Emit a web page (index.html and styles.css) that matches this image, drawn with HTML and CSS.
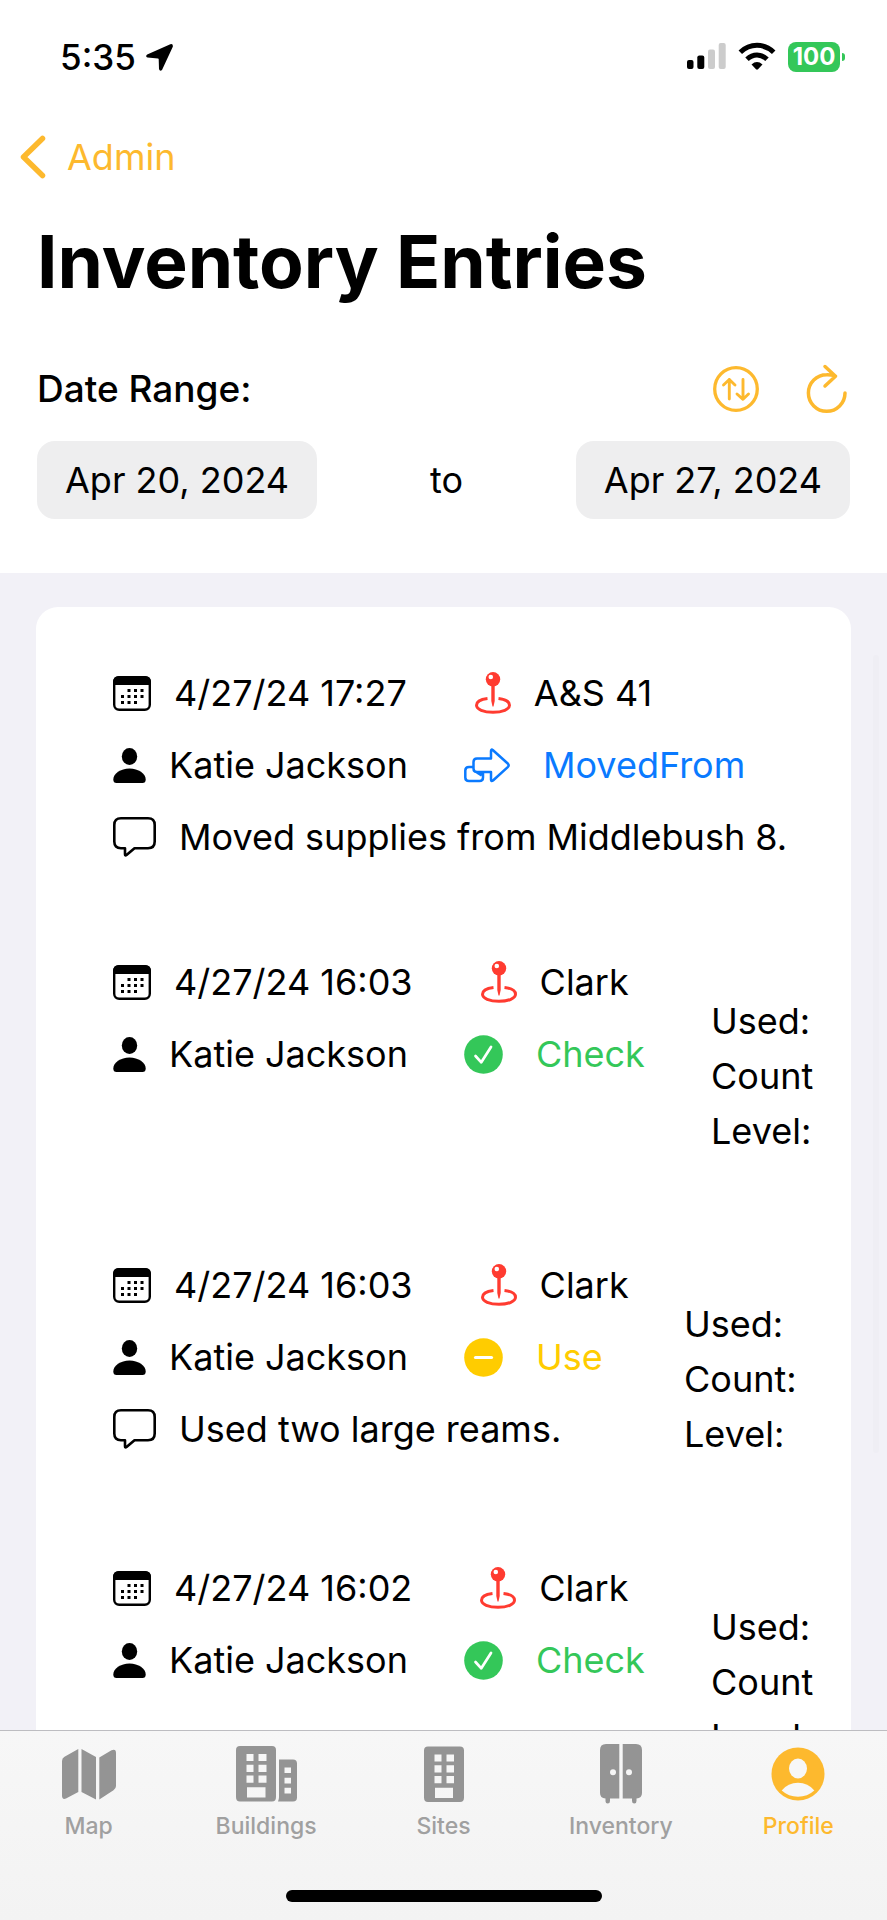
FILE: index.html
```html
<!DOCTYPE html>
<html lang="en">
<head>
<meta charset="utf-8">
<meta name="viewport" content="width=device-width, initial-scale=1">
<title>Inventory Entries</title>
<link rel="stylesheet" href="styles.css">
</head>
<body>
<svg class="sprite" aria-hidden="true">
  <symbol id="calendar" viewBox="0 0 38 35">
    <rect x="1.2" y="1.2" width="35.6" height="32.6" rx="5" fill="none" stroke="currentColor" stroke-width="2.4"/>
    <path d="M0 9V6Q0 0 6 0H32Q38 0 38 6V9Z" fill="currentColor"/>
    <path d="M16 14.5h.01M22.500 14.5h.01M29 14.500h.01M9.500 20.500h.01M16 20.500h.01M22.500 20.500h.01M29 20.500h.01M9.500 26.500h.01M16 26.500h.01M22.500 26.500h.01" stroke="currentColor" stroke-width="3" stroke-linecap="square"/>
  </symbol>
  <symbol id="person" viewBox="0 0 33 35">
    <ellipse cx="16.500" cy="8.500" rx="7.700" ry="8.500" fill="currentColor"/>
    <path d="M3.500 35Q.3 35 .3 31.500C.3 25.500 7.500 20.500 16.500 20.500S32.700 25.500 32.700 31.500Q32.700 35 29.500 35Z" fill="currentColor"/>
  </symbol>
  <symbol id="bubble" viewBox="0 0 43 40">
    <path d="M8 1.300H35Q41.700 1.300 41.700 8V24.500Q41.700 31.200 35 31.200H21.500L13.500 38Q12 39.200 12 37.300V31.200H8Q1.300 31.200 1.300 24.500V8Q1.300 1.300 8 1.300Z" fill="none" stroke="currentColor" stroke-width="2.600" stroke-linejoin="round"/>
  </symbol>
  <symbol id="pin" viewBox="0 0 36 42">
    <path d="M12.500 26.500C5.500 27.300 1.500 30 1.500 33.300C1.500 37.200 8.500 40.300 18 40.300S34.500 37.200 34.500 33.300C34.500 30 30.500 27.300 23.500 26.500" fill="none" stroke="currentColor" stroke-width="3"/>
    <path d="M16.300 12H19.700V29L18.500 34.500H17.500L16.300 29Z" fill="currentColor"/>
    <circle cx="18" cy="7.300" r="7.200" fill="currentColor"/>
    <circle cx="15.800" cy="5" r="2.300" fill="#fff"/>
  </symbol>
  <symbol id="moved" viewBox="0 0 46 35">
    <path d="M10 19H5Q1.300 19 1.300 22.500V29.500Q1.300 33 5 33H15.500Q19 33 19 29.500V25" fill="none" stroke="currentColor" stroke-width="2.500"/>
    <path d="M9.500 19Q10 24 13 26L17 28.500L20 25Z" fill="currentColor"/>
    <path d="M13 10.500H27V3Q27 .5 29 2.200L44 15.800Q45.300 17.300 44 18.800L29 32.500Q27 34 27 31.500V24H13Q9.500 24 9.500 20.500V14Q9.500 10.500 13 10.500Z" fill="#fff" stroke="currentColor" stroke-width="2.500" stroke-linejoin="round"/>
  </symbol>
  <symbol id="check" viewBox="0 0 39 39">
    <circle cx="19.500" cy="19.500" r="19.300" fill="currentColor"/>
    <path d="M11.500 21L17.300 27.300L27 12" fill="none" stroke="#fff" stroke-width="2.700" stroke-linecap="round" stroke-linejoin="round"/>
  </symbol>
  <symbol id="minus" viewBox="0 0 39 39">
    <circle cx="19.500" cy="19.500" r="19.300" fill="currentColor"/>
    <path d="M11.500 19.500H27.500" stroke="#fff" stroke-width="3.200" stroke-linecap="round"/>
  </symbol>
</svg>

<div class="app">
  <div class="status-bar">
    <div class="status-time">
      <span>5:35</span>
      <svg width="27" height="27" viewBox="0 0 27 27"><path d="M24.300.3L1.200 10.600Q-1 12.500 1.500 13.600L12 14.500Q12.600 14.600 12.700 15.200L13 25Q13.800 27.800 16 26L26.800 2.800Q27.300-.6 24.300.3Z" fill="#000"/></svg>
    </div>
    <div class="status-icons">
      <svg width="40" height="30" viewBox="0 0 40 30"><rect x="1" y="18" width="6.500" height="9" rx="2"/><rect x="11.300" y="13.500" width="7" height="13.500" rx="2"/><rect x="22" y="7.500" width="7" height="19.500" rx="2" fill="#ccc"/><rect x="32.700" y="1" width="7" height="26" rx="2" fill="#ccc"/></svg>
      <svg width="38" height="30" viewBox="0 0 38 30"><g fill="none" stroke="#000" stroke-width="5"><path d="M2.300 10.300Q9.500 3.300 19 3.300T35.700 10.300"/><path d="M9 17.300Q13.500 13 19 13T29 17.300"/></g><path d="M13.500 22.500Q19 17.700 24.500 22.500L20 27.300Q19 28.200 18 27.300Z"/></svg>
      <div class="battery"><span class="battery-level">100</span><span class="battery-tip"></span></div>
    </div>
  </div>

  <header class="header">
    <nav class="nav">
      <a class="back" href="#admin">
        <svg width="26" height="44" viewBox="0 0 26 44"><path d="M22.500 3.500L3.500 22L22.500 40.500" fill="none" stroke="currentColor" stroke-width="5.500" stroke-linecap="round" stroke-linejoin="round"/></svg>
        <span>Admin</span>
      </a>
    </nav>
    <h1 class="title">Inventory Entries</h1>
    <div class="filter">
      <h2 class="filter-label">Date Range:</h2>
      <div class="filter-actions">
        <button class="icon-button" type="button" aria-label="Sort">
          <svg width="46" height="46" viewBox="0 0 46 46" fill="none" stroke="currentColor" stroke-width="2.900" stroke-linecap="round" stroke-linejoin="round"><circle cx="23" cy="23" r="21.300" stroke-width="3.300"/><path d="M16.300 33V13.500M10.500 19L16.300 13.500L22 19M30 13.500V33M24 28L30 33.300L35.500 28"/></svg>
        </button>
        <button class="icon-button" type="button" aria-label="Refresh">
          <svg width="46" height="50" viewBox="0 0 46 50" fill="none" stroke="currentColor" stroke-width="3.500" stroke-linecap="round" stroke-linejoin="round"><path d="M41 29A18.300 18.300 0 1 1 22.700 10.700Q27 10.500 31.500 12.200M21 2.500L31.500 12.200L21 22"/></svg>
        </button>
      </div>
    </div>
    <div class="range">
      <button class="date" type="button">Apr 20, 2024</button>
      <span>to</span>
      <button class="date" type="button">Apr 27, 2024</button>
    </div>
  </header>

  <main class="list">
    <div class="scroll-thumb"></div>
    <div class="card">
      <article class="entry">
        <div class="lines">
          <div class="line line-top"><span class="item"><svg class="calendar"><use href="#calendar"/></svg>4/27/24 17:27</span><span class="item"><svg class="pin"><use href="#pin"/></svg>A&amp;S 41</span></div>
          <div class="line"><span class="item"><svg class="person"><use href="#person"/></svg>Katie Jackson</span><span class="item action moved"><svg class="arrow"><use href="#moved"/></svg>MovedFrom</span></div>
          <div class="line"><span class="item"><svg class="bubble"><use href="#bubble"/></svg>Moved supplies from Middlebush 8.</span></div>
        </div>
      </article>
      <article class="entry">
        <div class="lines">
          <div class="line line-top"><span class="item"><svg class="calendar"><use href="#calendar"/></svg>4/27/24 16:03</span><span class="item"><svg class="pin"><use href="#pin"/></svg>Clark</span></div>
          <div class="line"><span class="item"><svg class="person"><use href="#person"/></svg>Katie Jackson</span><span class="item action check"><svg class="badge"><use href="#check"/></svg>Check</span></div>
        </div>
        <div class="stats"><span>Used:</span><span>Count</span><span>Level:</span></div>
      </article>
      <article class="entry">
        <div class="lines">
          <div class="line line-top"><span class="item"><svg class="calendar"><use href="#calendar"/></svg>4/27/24 16:03</span><span class="item"><svg class="pin"><use href="#pin"/></svg>Clark</span></div>
          <div class="line"><span class="item"><svg class="person"><use href="#person"/></svg>Katie Jackson</span><span class="item action use"><svg class="badge"><use href="#minus"/></svg>Use</span></div>
          <div class="line"><span class="item"><svg class="bubble"><use href="#bubble"/></svg>Used two large reams.</span></div>
        </div>
        <div class="stats stats-wide"><span>Used:</span><span>Count:</span><span>Level:</span></div>
      </article>
      <article class="entry">
        <div class="lines">
          <div class="line line-top"><span class="item"><svg class="calendar"><use href="#calendar"/></svg>4/27/24 16:02</span><span class="item"><svg class="pin"><use href="#pin"/></svg>Clark</span></div>
          <div class="line"><span class="item"><svg class="person"><use href="#person"/></svg>Katie Jackson</span><span class="item action check"><svg class="badge"><use href="#check"/></svg>Check</span></div>
        </div>
        <div class="stats"><span>Used:</span><span>Count</span><span>Level:</span></div>
      </article>
    </div>
  </main>

  <footer class="tab-bar">
    <nav class="tabs">
      <a class="tab" href="#map">
        <svg width="54" height="60" viewBox="0 0 54 60" fill="currentColor"><path d="M16.300 5V48L4 54.500Q0 56 0 51.500V17Q0 14 2.500 12.700ZM19.500 5L34 13V55.500L19.500 48ZM37.300 13.500L49.500 6.300Q54 4.500 54 9V42Q54 44.500 51.500 46.300L37.300 55.500Z"/></svg>
        <span>Map</span>
      </a>
      <a class="tab" href="#buildings">
        <svg width="61" height="60" viewBox="0 0 61 60" fill="currentColor" fill-rule="evenodd"><path d="M4 2H36Q40 2 40 6V53Q40 57.500 36 57.500H4Q0 57.500 0 53V6Q0 2 4 2ZM10.500 10H17.500V17H10.500ZM22.500 10H30.500V17H22.500ZM10.500 20.700H17.500V28H10.500ZM22.500 20.700H30.500V28H22.500ZM10.500 31.500H17.500V38.700H10.500ZM22.500 31.500H30.500V38.700H22.500ZM11 43.300H29.500V53.500H11ZM43 15.500H57Q61 15.500 61 19.500V53.500Q61 57.500 57 57.500H42Q43 55.500 43 53ZM48.500 23.500H55V29H48.500ZM48.500 33.700H55V39.500H48.500ZM48.500 43.700H55V49.500H48.500Z"/></svg>
        <span>Buildings</span>
      </a>
      <a class="tab" href="#sites">
        <svg width="40" height="60" viewBox="0 0 40 60" fill="currentColor" fill-rule="evenodd"><path d="M4 2.500H36Q40 2.500 40 6.500V53.500Q40 58 36 58H4Q0 58 0 53.500V6.500Q0 2.500 4 2.500ZM10.500 10.500H17.500V17.500H10.500ZM22.500 10.500H30V17.500H22.500ZM10.500 21.200H17.500V28.500H10.500ZM22.500 21.200H30V28.500H22.500ZM10.500 32H17.500V39.200H10.500ZM22.500 32H30V39.200H22.500ZM11 43.800H29V54H11Z"/></svg>
        <span>Sites</span>
      </a>
      <a class="tab" href="#inventory">
        <svg width="42" height="60" viewBox="0 0 42 60" fill="currentColor" fill-rule="evenodd"><path d="M6 0H19.300V54.500H10V57Q10 59.500 7.700 59.500T5.500 57V54.500Q0 54 0 49V6Q0 0 6 0ZM13 25.300A3 3 0 1 0 13 31.300A3 3 0 1 0 13 25.300ZM22.700 0H36Q42 0 42 6V49Q42 54 36.500 54.500V57Q36.500 59.500 34.300 59.500T32 57V54.500H22.700ZM29 25.300A3 3 0 1 0 29 31.300A3 3 0 1 0 29 25.300Z"/></svg>
        <span>Inventory</span>
      </a>
      <a class="tab tab-active" href="#profile">
        <svg width="54" height="60" viewBox="0 0 54 60"><circle cx="27" cy="30" r="26.500" fill="currentColor"/><ellipse cx="27" cy="24.500" rx="9" ry="10" fill="#f7f7f7"/><path d="M10.700 46.500Q17 38.800 27 38.800T43.300 46.500Q36.500 52.700 27 52.700T10.700 46.500Z" fill="#f7f7f7"/></svg>
        <span>Profile</span>
      </a>
    </nav>
    <div class="home-indicator"></div>
  </footer>
</div>
</body>
</html>
```
FILE: styles.css
```css
* {
  box-sizing: border-box;
}

body {
  margin: 0;
  background: #fff;
  color: #000;
  font-family: Inter, "Liberation Sans", sans-serif;
  font-size: 36px;
  line-height: 48px;
}

button {
  padding: 0;
  border: 0;
  background: none;
  color: inherit;
  font: inherit;
}

a {
  color: inherit;
  text-decoration: none;
}

svg {
  display: block;
  flex: none;
}

.sprite {
  position: absolute;
  width: 0;
  height: 0;
}

.app {
  display: flex;
  flex-direction: column;
  height: 100vh;
}

/* Status bar */
.status-bar {
  display: flex;
  flex: none;
  justify-content: space-between;
  align-items: center;
  height: 114px;
  padding: 0 42px 0 60px;
}

.status-time {
  display: flex;
  align-items: center;
  gap: 10px;
  font-size: 35px;
  font-weight: 500;
}

.status-icons {
  display: flex;
  align-items: center;
  gap: 12px;
}

.battery {
  display: flex;
  align-items: center;
  gap: 2px;
}

.battery-level {
  width: 52px;
  border-radius: 8px;
  background: #34c759;
  color: #fff;
  font-size: 24px;
  font-weight: 700;
  line-height: 30px;
  text-align: center;
}

.battery-tip {
  width: 3px;
  height: 8px;
  border-radius: 0 4px 4px 0;
  background: #34c759;
}

/* Header */
.header {
  flex: none;
  padding: 0 37px 54px;
}

.nav {
  display: flex;
  align-items: center;
  height: 86px;
  margin-left: -17px;
}

.back {
  display: flex;
  align-items: center;
  gap: 21px;
  color: #fdb92e;
}

.title {
  margin: 0;
  font-size: 73px;
  font-weight: 700;
  line-height: 124px;
}

.filter {
  display: flex;
  justify-content: space-between;
  align-items: center;
  height: 78px;
  margin: 26px 0 13px;
}

.filter-label {
  margin: 0;
  font-size: 37px;
  font-weight: 500;
}

.filter-actions {
  display: flex;
  align-items: center;
  gap: 45px;
}

.icon-button {
  color: #fdb92e;
}

.range {
  display: flex;
  justify-content: space-between;
  align-items: center;
}

.date {
  height: 78px;
  padding: 0 28px;
  border-radius: 18px;
  background: #eeeeef;
}

/* Entry list */
.list {
  position: relative;
  flex: 1;
  min-height: 0;
  padding: 34px 36px 0;
  overflow: hidden;
  background: #f2f1f7;
}

.scroll-thumb {
  position: absolute;
  top: 82px;
  right: 8px;
  width: 6px;
  height: 798px;
  border-radius: 3px;
  background: #efeef4;
}

.card {
  display: flex;
  flex-direction: column;
  gap: 73px;
  padding: 50px 36px 50px 77px;
  border-radius: 22px;
  background: #fff;
}

.entry {
  display: flex;
  justify-content: space-between;
  white-space: nowrap;
}

.lines {
  flex: 1;
  min-width: 0;
}

.line {
  display: flex;
  align-items: center;
  gap: 56px;
  height: 72px;
}

.line-top {
  gap: 68px;
}

.item {
  display: flex;
  align-items: center;
  gap: 23px;
}

.action {
  gap: 33px;
}

.moved {
  color: #0a7aff;
}

.check {
  color: #34c759;
}

.use {
  color: #fc0;
}

.pin {
  width: 36px;
  height: 42px;
  color: #ff3b30;
}

.calendar {
  width: 38px;
  height: 35px;
}

.person {
  width: 33px;
  height: 35px;
}

.bubble {
  width: 43px;
  height: 40px;
}

.arrow {
  width: 46px;
  height: 35px;
}

.badge {
  width: 39px;
  height: 39px;
}

.stats {
  display: flex;
  flex: none;
  flex-direction: column;
  width: 104px;
  padding: 48px 0 17px;
  line-height: 55px;
}

.stats-wide {
  width: 131px;
}

/* Tab bar */
.tab-bar {
  display: flex;
  flex: none;
  flex-direction: column;
  justify-content: space-between;
  align-items: center;
  height: 190px;
  padding: 13px 0 18px;
  border-top: 1px solid #bdbdc1;
  background: linear-gradient(#f7f7f7, #f3f3f3);
}

.tabs {
  display: flex;
  align-self: stretch;
}

.tab {
  display: flex;
  flex: 1 1 0;
  flex-direction: column;
  align-items: center;
  gap: 8px;
  color: #949494;
  font-size: 23px;
  font-weight: 500;
  line-height: 28px;
}

.tab span {
  color: #a0a0a0;
}

.tab.tab-active,
.tab-active span {
  color: #fdb92e;
}

.home-indicator {
  width: 316px;
  height: 12px;
  border-radius: 6px;
  background: #000;
}
```
